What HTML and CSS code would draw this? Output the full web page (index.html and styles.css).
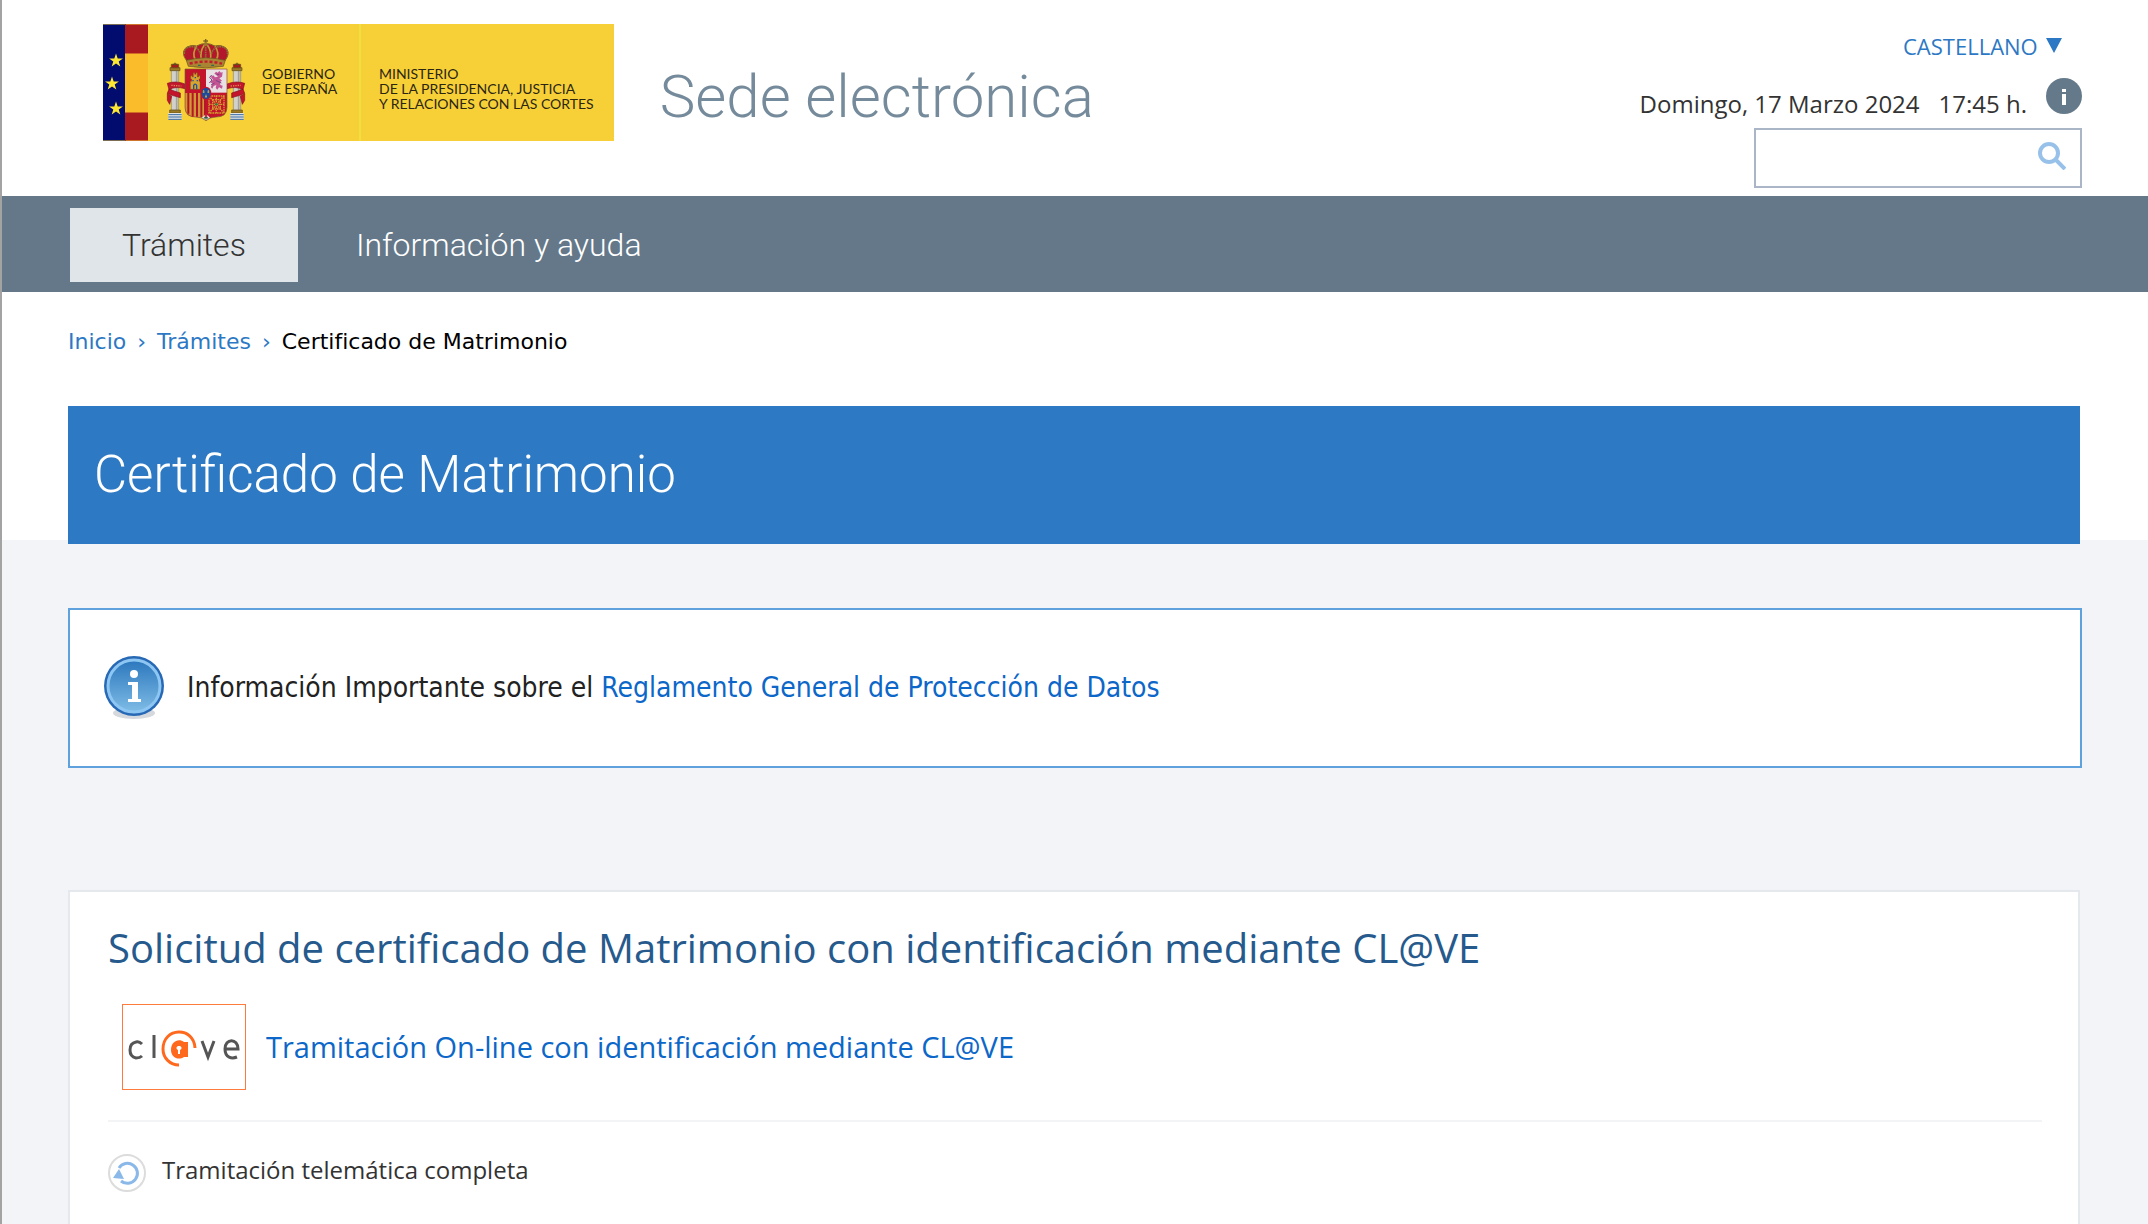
FILE: index.html
```html
<!DOCTYPE html>
<html lang="es">
<head>
    <meta charset="UTF-8">
    <meta name="viewport" content="width=device-width, initial-scale=1.0">
    <title>Certificado de Matrimonio - Sede electrónica</title>
    <link rel="stylesheet" href="styles.css">
</head>
<body>
    <!-- Cabecera -->
    <header class="header">
        <a class="brand" href="#">
            <svg class="brand-flag" viewBox="0 0 45 116" aria-hidden="true">
                <rect width="23" height="116" fill="#020c6e"/>
                <rect x="22" width="23" height="116" fill="#a91a20"/>
                <rect x="22" y="29" width="23" height="59" fill="#fbbc2b"/>
                <g fill="#fde733">
                    <path id="star" d="M13 29l1.700 4.900h5.200l-4.200 3.100 1.600 5-4.300-3-4.300 3 1.600-5-4.200-3.100h5.200z"/>
                    <use href="#star" x="-4" y="23"/>
                    <use href="#star" y="48"/>
                </g>
            </svg>
            <svg class="brand-arms" viewBox="230 85 240 250" aria-hidden="true">
                <!-- corona -->
                <path d="M292 152Q276 132 286 118Q299 103 322 108Q349 93 377 108Q400 103 413 118Q422 132 407 152Z" fill="#b3172b" stroke="#7c6420" stroke-width="3"/>
                <path d="M318 150Q307 130 322 109M381 150Q392 130 377 109M336 150Q331 124 345 105M363 150Q368 124 354 105" fill="none" stroke="#c09a3a" stroke-width="5"/>
                <path d="M285 132Q283 112 304 110Q326 108 333 132M366 132Q373 108 395 110Q416 112 414 132M349 104V150" fill="none" stroke="#8d7136" stroke-width="5" stroke-dasharray="5 2"/>
                <path d="M349 87v17M342 93h14" stroke="#7c6420" stroke-width="4"/>
                <circle cx="349" cy="102" r="6" fill="#9a7b2c"/>
                <path d="M291 151Q349 136 408 151L402 169Q349 178 297 169Z" fill="#a88433" stroke="#6b511d" stroke-width="2"/>
                <path d="M301 161Q349 149 398 161" fill="none" stroke="#c31b2b" stroke-width="7" stroke-dasharray="9 6"/>
                <path d="M326 166h8M366 166h8" stroke="#316b54" stroke-width="4"/>
                <!-- columnas -->
                <g id="column">
                    <path d="M246 181h22v120h-22z" fill="#d1d0cb" stroke="#8a8672" stroke-width="2"/>
                    <path d="M262 182v118" stroke="#a5a294" stroke-width="5"/>
                    <path d="M242 173h30v9h-30zM241 300h32v9h-32z" fill="#9a7927" stroke="#624b18" stroke-width="2"/>
                    <path d="M246 163h22v10h-22z" fill="#a91a20" stroke="#624b18" stroke-width="2"/>
                    <path d="M257 158v9M250 163h14" stroke="#624b18" stroke-width="4"/>
                    <path d="M237 309h40v20h-40z" fill="#e3e6e5"/>
                    <path d="M237 314h40M237 321h40M237 328h40" stroke="#3568a4" stroke-width="3"/>
                </g>
                <use href="#column" x="186"/>
                <!-- cintas -->
                <g fill="#c3152c" stroke="#87121c" stroke-width="2">
                    <path d="M234 220Q260 211 287 222V236Q259 228 239 239ZM239 237Q253 243 273 249V263Q248 257 234 250ZM234 251L247 259 241 283 234 271Z"/>
                    <path d="M466 220Q440 211 413 222V236Q441 228 461 239ZM461 237Q447 243 427 249V263Q452 257 466 250ZM466 251L453 259 459 283 466 271Z"/>
                </g>
                <path d="M246 226l30 2M424 228l30-2" stroke="#d58a52" stroke-width="4" stroke-dasharray="4 3"/>
                <!-- escudo -->
                <path d="M287 177H413V292Q413 321 381 321Q362 321 350 332Q338 321 319 321Q287 321 287 292Z" fill="#c4142b" stroke="#725d34" stroke-width="2"/>
                <path d="M350 178H412V248H350Z" fill="#e8e1e4"/>
                <path d="M288 249H349V329Q338 320 319 320Q288 320 288 292Z" fill="#cf9a35"/>
                <path d="M297 249v62M310 249v71M323 249v71M336 249v72M347 249v77" stroke="#b71629" stroke-width="6"/>
                <path d="M303 238V214H307V207H304V197H309V201H312V188H316V193H320V188H324V201H328V197H332V207H329V214H332V238Z" fill="#d5a52f" stroke="#674b18" stroke-width="1"/>
                <path d="M313 238v-12q5-7 9 0v12M309 212h4M322 212h4M316 203h4" fill="none" stroke="#22539b" stroke-width="4"/>
                <path d="M375 191l5-6 5 3 5-5 5 5 5-2-2 14-8 5 8 7-6 4 1 9 7 2-2 9-9-4-5 7-5-5 2-9-8 3-4 8-5-5 6-9-7-6 8-7-7-9 8-4 5 6 9-2-6-6z" fill="#c45595"/>
                <path d="M367 195l-6 7 7 8-8 9M382 193h8M379 211l17 8M376 219l-11 6" fill="none" stroke="#7e407f" stroke-width="3"/>
                <!-- cadenas -->
                <g fill="none" stroke="#d19a2e" stroke-width="4" stroke-dasharray="5 2">
                    <rect x="359" y="258" width="45" height="51"/>
                    <rect x="370" y="269" width="23" height="28"/>
                    <path d="M359 258l45 51M404 258l-45 51M381 257v53M359 283h45"/>
                </g>
                <circle cx="381" cy="283" r="4" fill="#38744f"/>
                <path d="M338 323q12-18 24 0l-12 8z" fill="#e0e2d8"/>
                <path d="M343 325l7-5 7 5M350 320v9" stroke="#32724b" stroke-width="3"/>
                <circle cx="350" cy="318" r="4" fill="#bf3544"/>
                <!-- lises -->
                <ellipse cx="350" cy="250" rx="16" ry="20" fill="#c4142b"/>
                <ellipse cx="350" cy="250" rx="13" ry="17" fill="#1d4a9b"/>
                <path d="M343 240v9M340 246h6M357 240v9M354 246h6M350 254v9M347 260h6" stroke="#c9a74b" stroke-width="3"/>
            </svg>
            <span class="brand-text brand-gov">GOBIERNO<br>DE ESPAÑA</span>
            <span class="brand-text brand-ministry">MINISTERIO<br>DE LA PRESIDENCIA, JUSTICIA<br>Y RELACIONES CON LAS CORTES</span>
        </a>
        <span class="site-name">Sede electrónica</span>

        <div class="tools">
            <label class="language">
                <select aria-label="Idioma">
                    <option>CASTELLANO</option>
                </select>
                <svg viewBox="0 0 16 16" aria-hidden="true"><path d="M0 0h16l-8 15z" fill="#2d78c4"/></svg>
            </label>
            <div class="datetime">
                <span>Domingo, 17 Marzo 2024</span>
                <span>17:45 h.</span>
                <a class="help" href="#" aria-label="Información">
                    <svg viewBox="0 0 36 36" aria-hidden="true">
                        <circle cx="18" cy="18" r="18" fill="#647a8b"/>
                        <path d="M16 11h4v3h-4zM16 16h4v11h-4z" fill="#fff"/>
                    </svg>
                </a>
            </div>
            <form class="search">
                <input type="search" aria-label="Buscar">
                <button type="button" aria-label="Buscar">
                    <svg viewBox="0 0 28 28" aria-hidden="true">
                        <circle cx="11" cy="11" r="9" fill="none" stroke="#98c1ea" stroke-width="4"/>
                        <path d="M17 17l10 10" stroke="#98c1ea" stroke-width="4"/>
                    </svg>
                </button>
            </form>
        </div>
    </header>

    <!-- Menú principal -->
    <nav class="menu">
        <a class="active" href="#">Trámites</a>
        <a href="#">Información y ayuda</a>
    </nav>

    <div class="top">
        <nav class="breadcrumb">
            <a href="#">Inicio</a><span class="sep">›</span><a href="#">Trámites</a><span class="sep">›</span><span>Certificado de Matrimonio</span>
        </nav>
        <h1>Certificado de Matrimonio</h1>
    </div>

    <main>
        <section class="notice">
            <svg class="notice-icon" viewBox="0 0 62 64" aria-hidden="true">
                <defs>
                    <linearGradient id="blue" x1="0" y1="0" x2="0" y2="1">
                        <stop offset="0" stop-color="#2b77bd"/>
                        <stop offset="1" stop-color="#7fbce6"/>
                    </linearGradient>
                </defs>
                <ellipse cx="31" cy="57" rx="21" ry="6" fill="#d5d8dc"/>
                <circle cx="31" cy="30" r="30" fill="#2769b5"/>
                <circle cx="31" cy="30" r="26" fill="url(#blue)" stroke="#8dc6f2" stroke-width="3"/>
                <circle cx="31" cy="18" r="4" fill="#fff"/>
                <path d="M25 26h10v17h3v3H25v-3h4V29h-4z" fill="#fff"/>
            </svg>
            <p>Información Importante sobre el <a href="#">Reglamento General de Protección de Datos</a></p>
        </section>

        <section class="card">
            <h2>Solicitud de certificado de Matrimonio con identificación mediante CL@VE</h2>
            <a class="procedure" href="#">
                <svg class="clave" viewBox="0 0 124 86" aria-hidden="true">
                    <rect x="0.5" y="0.5" width="123" height="85" fill="#fff" stroke="#ff7b3d"/>
                    <g fill="none" stroke="#555" stroke-width="3">
                        <path d="M20 40q-3-3-6-2c-5 1-6 5-6 8s1 7 6 8q4 0 6-2"/>
                        <path d="M32 31v23"/>
                        <path d="M80 37l6 16 6-16"/>
                        <path d="M103 45h13c0-11-13-11-13 0 0 9 7 10 12 8"/>
                    </g>
                    <path d="M73 44C72 22 41 23 41 45c0 9 7 16 16 16" fill="none" stroke="#ff691d" stroke-width="3"/>
                    <path d="M66 38v15h-4c-6 4-13 0-13-7 0-9 8-12 13-8z" fill="#ff691d"/>
                    <path d="M57 42a2 2 0 0 1 1 4v4h-2v-4a2 2 0 0 1 1-4z" fill="#fff"/>
                </svg>
                <span>Tramitación On-line con identificación mediante CL@VE</span>
            </a>
            <div class="status">
                <svg viewBox="0 0 38 38" aria-hidden="true">
                    <circle cx="19" cy="19" r="18" fill="#fff" stroke="#dcdcdc" stroke-width="2"/>
                    <path d="M11 14a10 10 0 1 1 2 13" fill="none" stroke="#8ab8e8" stroke-width="3"/>
                    <path d="M11 15l5 10-11-1z" fill="#8ab8e8"/>
                </svg>
                <span>Tramitación telemática completa</span>
            </div>
        </section>
    </main>
</body>
</html>
```
FILE: styles.css
```css
* {
    box-sizing: border-box;
}

html {
    overflow-x: hidden;
}

body {
    margin: 0;
    min-height: 100vh;
    border-left: 2px solid #a3a3a3;
    background-color: #f3f4f8;
    color: #333;
    font-family: "Open Sans", sans-serif;
    font-size: 24px;
    line-height: 32px;
}

a {
    color: #0c67c8;
    text-decoration: none;
}

svg {
    display: block;
    flex: none;
}

/* Cabecera */
.header {
    display: flex;
    align-items: flex-start;
    padding: 24px 66px 8px 101px;
    background-color: #fff;
}

.brand {
    display: flex;
    height: 117px;
    background-color: #f7d038;
    color: #2b2614;
    font-family: Lato, sans-serif;
    font-size: 14px;
    line-height: 15px;
    white-space: nowrap;
}

.brand-flag {
    width: 45px;
    height: 117px;
}

.brand-arms {
    width: 80px;
    height: 84px;
    margin: 14px 0 0 18px;
}

.brand-text {
    padding-top: 42px;
}

.brand-gov {
    width: 115px;
    padding-left: 16px;
    border-right: 2px solid #f2de3c;
}

.brand-ministry {
    padding-left: 18px;
    padding-right: 20px;
}

.site-name {
    margin: 37px 0 0 46px;
    color: #758b9b;
    font-family: Roboto, sans-serif;
    font-size: 60px;
    font-weight: 300;
    line-height: 72px;
    white-space: nowrap;
}

.tools {
    display: flex;
    flex-direction: column;
    align-items: flex-end;
    margin-left: auto;
}

.language {
    display: flex;
    align-items: center;
    gap: 8px;
    height: 44px;
    padding-right: 20px;
}

.language select {
    appearance: none;
    padding: 0;
    border: none;
    background: none;
    color: #2d78c4;
    font: inherit;
    font-size: 22px;
}

.language svg {
    width: 16px;
    height: 16px;
}

.datetime {
    display: flex;
    align-items: flex-end;
    gap: 19px;
    height: 52px;
    margin-bottom: 8px;
    white-space: nowrap;
}

.help svg {
    width: 36px;
    height: 36px;
    margin-bottom: 6px;
}

.search {
    display: flex;
    align-items: center;
    width: 328px;
    height: 60px;
    border: 2px solid #aab6c7;
}

.search input {
    flex: 1;
    min-width: 0;
    height: 100%;
    padding: 0 12px;
    border: none;
    outline: none;
    font: inherit;
}

.search button {
    padding: 0 14px 4px;
    border: none;
    background: none;
    cursor: pointer;
}

.search button svg {
    width: 28px;
    height: 28px;
}

/* Menú principal */
.menu {
    display: flex;
    gap: 6px;
    padding: 12px 68px 10px;
    background-color: #647889;
}

.menu a {
    padding: 0 52px;
    color: #fff;
    font-family: Roboto, sans-serif;
    font-size: 32px;
    font-weight: 300;
    line-height: 74px;
}

.menu .active {
    background-color: #dfe5e8;
    color: #333;
}

/* Migas y título */
.top {
    display: flow-root;
    padding: 0 68px 0 66px;
    background-color: #fff;
}

.breadcrumb {
    padding: 34px 0 48px;
    color: #000;
    font-family: "DejaVu Sans", sans-serif;
    font-size: 22px;
}

.breadcrumb a {
    color: #2d78c4;
}

.sep {
    margin: 0 11px;
    color: #2d78c4;
}

h1 {
    position: relative;
    margin: 0 0 -4px;
    padding: 0 26px;
    background-color: #2d79c4;
    color: #fff;
    font-family: Roboto, sans-serif;
    font-size: 51px;
    font-weight: 300;
    line-height: 138px;
}

main {
    padding: 68px 68px 0 66px;
}

/* Aviso */
.notice {
    display: flex;
    align-items: center;
    gap: 22px;
    height: 160px;
    margin-right: -2px;
    padding: 0 33px;
    border: 2px solid #5ea1dd;
    background-color: #fff;
    color: #222;
    font-family: "DejaVu Sans Condensed", "DejaVu Sans", sans-serif;
    font-size: 28px;
}

.notice p {
    margin: 0;
}

.notice-icon {
    width: 62px;
    height: 64px;
}

/* Trámite */
.card {
    margin-top: 122px;
    padding: 26px 36px 60px 38px;
    border: 2px solid #e5e8ec;
    background-color: #fff;
}

h2 {
    margin: 0;
    color: #265a8d;
    font-size: 40px;
    font-weight: 400;
    line-height: 60px;
}

.procedure {
    display: flex;
    align-items: center;
    gap: 20px;
    padding: 26px 14px 30px;
    border-bottom: 2px solid #f3f4f6;
    font-size: 29px;
}

.clave {
    width: 124px;
    height: 86px;
}

.status {
    display: flex;
    align-items: flex-start;
    gap: 16px;
    padding-top: 32px;
}

.status svg {
    width: 38px;
    height: 38px;
}
```
